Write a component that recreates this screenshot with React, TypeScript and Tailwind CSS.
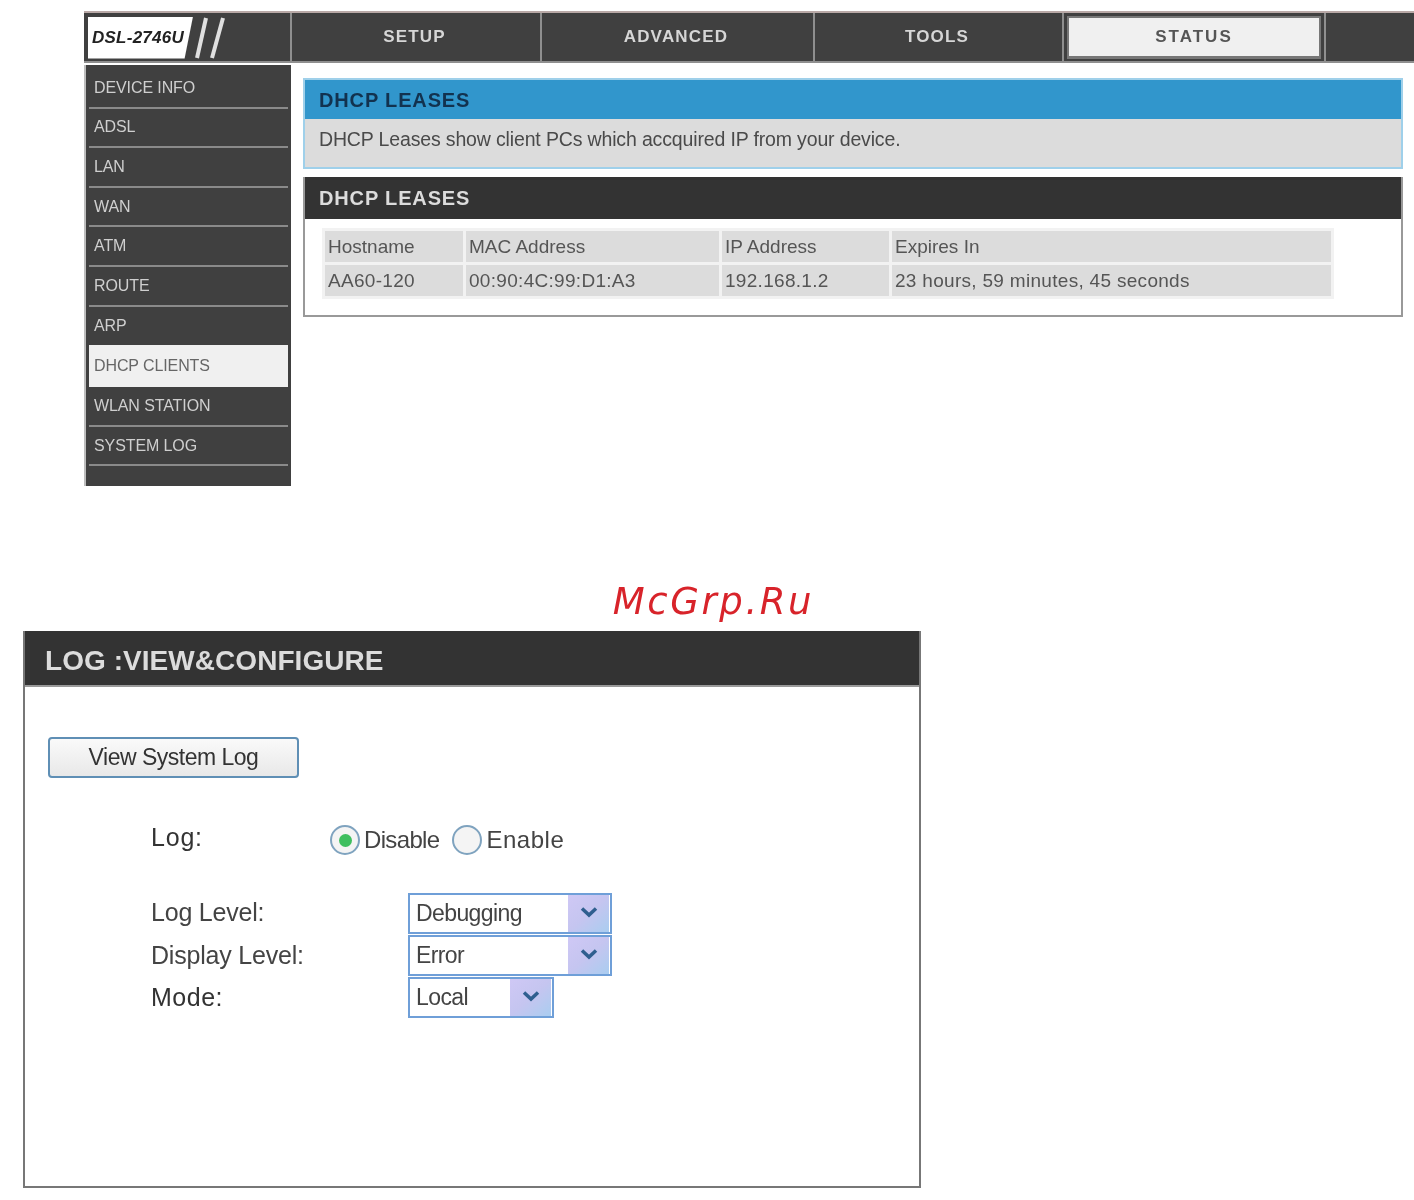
const sideItems = [
  "DEVICE INFO",
  "ADSL",
  "LAN",
  "WAN",
  "ATM",
  "ROUTE",
  "ARP",
  "DHCP CLIENTS",
  "WLAN STATION",
  "SYSTEM LOG",
];

function TopNav() {
  return (
    <div className="flex h-[52px] border-t-2 border-[#b9a9a7] bg-[#404040] shadow-[inset_0_-2px_0_#8f8f8f]">
      {/* Logo */}
      <div className="flex h-full w-[208px] shrink-0 items-center border-r-2 border-[#8f8f8f] pb-[1px] pl-[4px]">
        <div className="flex h-[42px] w-[105px] shrink-0 items-center bg-white pl-[4px] [clip-path:polygon(0_0,100%_0,92%_100%,0_100%)]">
          <span className="text-[17px] leading-none font-bold tracking-[0.25px] text-[#222] italic">DSL-2746U</span>
        </div>
        <svg width="36" height="44" viewBox="0 0 36 44" className="ml-[1px]">
          <path d="M12 2 L3 42" stroke="#e0e0e0" strokeWidth="4" />
          <path d="M29 2 L18 42" stroke="#e0e0e0" strokeWidth="4" />
        </svg>
      </div>
      <Tab w="w-[250px]" label="SETUP" />
      <Tab w="w-[273px]" label="ADVANCED" />
      <Tab w="w-[249px]" label="TOOLS" />
      <div className="flex h-full w-[262px] shrink-0 items-center justify-center border-r-2 border-[#8f8f8f] pb-[2px]">
        <div className="flex h-[43px] w-[254px] items-center justify-center border-2 border-b-[3px] border-[#777] bg-[#f0f0f0] text-[17px] font-bold tracking-[2px] text-[#555]">
          STATUS
        </div>
      </div>
    </div>
  );
}

function Tab({ w, label }: { w: string; label: string }) {
  return (
    <div className={`flex h-full ${w} shrink-0 items-center justify-center border-r-2 border-[#8f8f8f] pr-[3px] pb-[2px] text-[17px] font-bold tracking-[1.2px] text-[#d6d6d6]`}>
      {label}
    </div>
  );
}

function Sidebar() {
  return (
    <div className="h-[421px] w-[205px] shrink-0 bg-[#404040] px-[3px] pt-[4px]">
      {sideItems.map((s) =>
        s === "DHCP CLIENTS" ? (
          <div key={s} className="-mt-[1px] flex h-[42px] items-center bg-[#f0f0f0] px-[5px] text-[16px] tracking-[-0.1px] text-[#666]">
            {s}
          </div>
        ) : (
          <div
            key={s}
            className={`flex h-[39.6px] items-center px-[5px] text-[16px] tracking-[-0.1px] text-[#cfcfcf] ${s === "ARP" ? "" : "border-b-2 border-[#8a8a8a]"}`}
          >
            {s}
          </div>
        ),
      )}
    </div>
  );
}

function LeasesTable() {
  return (
    <div className="ml-[17px] mt-[9px] w-[1012px] bg-[#f2f2f2] p-[3px]">
      <div className="flex flex-col gap-[3px] text-[19px] text-[#555]">
        <div className="grid h-[31px] grid-cols-[138px_253px_167px_1fr] gap-x-[3px]">
          {["Hostname", "MAC Address", "IP Address", "Expires In"].map((c) => (
            <div key={c} className="flex items-center bg-[#dcdcdc] pl-[3px] pt-[2px]">
              {c}
            </div>
          ))}
        </div>
        <div className="grid h-[31px] grid-cols-[138px_253px_167px_1fr] gap-x-[3px] tracking-[0.3px]">
          {["AA60-120", "00:90:4C:99:D1:A3", "192.168.1.2", "23 hours, 59 minutes, 45 seconds"].map((c) => (
            <div key={c} className="flex items-center bg-[#dcdcdc] pl-[3px] pt-[2px]">
              {c}
            </div>
          ))}
        </div>
      </div>
    </div>
  );
}

function Select({ w, label }: { w: string; label: string }) {
  return (
    <div className={`flex h-[41px] ${w} border-2 border-[#6f9fd8] bg-white`}>
      <div className="flex flex-1 items-center pl-[6px] text-[23px] tracking-[-0.6px] text-[#444]">{label}</div>
      <div className="mr-[1px] flex w-[41px] items-center justify-center bg-gradient-to-br from-[#cfc8f5] via-[#c5c5f0] to-[#a9cdf0]">
        <svg width="18" height="12" viewBox="0 0 18 12" className="-mt-[3px]">
          <path d="M2 2.5 L9 9 L16 2.5" fill="none" stroke="#2f5f8f" strokeWidth="3.5" />
        </svg>
      </div>
    </div>
  );
}

function Radio({ on }: { on?: boolean }) {
  return (
    <div className="flex h-[30px] w-[30px] items-center justify-center rounded-full border-2 border-[#7fa3bf] bg-[#f4f4f4]">
      {on && <div className="h-[13px] w-[13px] rounded-full bg-[#3fbf5f]" />}
    </div>
  );
}

export default function App() {
  return (
    <div className="h-[1200px] w-[1414px] overflow-hidden bg-white font-['Liberation_Sans',Arial,sans-serif] blur-[0.5px]">
      {/* Router page */}
      <div className="ml-[84px] pt-[11px]">
        <TopNav />
        <div className="mt-[2px] flex border-l-2 border-[#bdbdbd]">
          <Sidebar />
          <div className="ml-[12px] w-[1100px] pt-[13px]">
            <div className="border-2 border-[#9fd0ea] bg-[#dcdcdc]">
              <div className="flex h-[39px] items-center bg-[#3196cc] pl-[14px] text-[20px] font-bold tracking-[0.85px] text-[#12324f]">
                DHCP LEASES
              </div>
              <div className="h-[48px] pl-[14px] pt-[6px] text-[19.5px] tracking-[-0.15px] text-[#4a4a4a]">
                DHCP Leases show client PCs which accquired IP from your device.
              </div>
            </div>
            <div className="mt-[8px] h-[140px] border-2 border-t-0 border-[#999]">
              <div className="flex h-[42px] items-center bg-[#333] pl-[14px] text-[20px] font-bold tracking-[0.85px] text-[#dcdcdc]">
                DHCP LEASES
              </div>
              <LeasesTable />
            </div>
          </div>
        </div>
      </div>

      <div className="mt-[91px] pl-[13px] text-center font-['DejaVu_Sans',sans-serif] text-[37px] leading-[50px] tracking-[2.6px] text-[#d8232a] italic">
        McGrp.Ru
      </div>

      {/* Log panel */}
      <div className="ml-[23px] mt-[4px] h-[557px] w-[898px] border-2 border-t-0 border-[#777]">
        <div className="flex h-[56px] items-center border-b-2 border-[#999] bg-[#333] pl-[20px] pt-[5px] text-[28px] font-bold tracking-[0.05px] text-[#dcdcdc]">
          LOG :VIEW&amp;CONFIGURE
        </div>
        <div className="pl-[23px] pt-[50px]">
          <div className="flex h-[41px] w-[251px] items-center justify-center rounded-[4px] border-2 border-[#5f8fb5] bg-gradient-to-b from-[#fafafa] to-[#e8e8e8] text-[23px] tracking-[-0.5px] text-[#333]">
            View System Log
          </div>
          <div className="ml-[103px] mt-[44px]">
            <div className="flex items-center">
              <div className="-mt-[5px] w-[179px] text-[25px] tracking-[0.8px] text-[#333]">Log:</div>
              <Radio on />
              <span className="ml-[4px] text-[24px] tracking-[-0.65px] text-[#444]">Disable</span>
              <div className="ml-[12px]">
                <Radio />
              </div>
              <span className="ml-[5px] text-[24px] tracking-[0.5px] text-[#444]">Enable</span>
            </div>
            <div className="mt-[35px] grid grid-cols-[257px_1fr] items-center gap-y-[1px] text-[25px] tracking-[-0.2px] text-[#444]">
              <div className="-mt-[2px]">Log Level:</div>
              <Select w="w-[204px]" label="Debugging" />
              <div>Display Level:</div>
              <Select w="w-[204px]" label="Error" />
              <div className="tracking-[0.5px] text-[#333]">Mode:</div>
              <Select w="w-[146px]" label="Local" />
            </div>
          </div>
        </div>
      </div>
    </div>
  );
}
